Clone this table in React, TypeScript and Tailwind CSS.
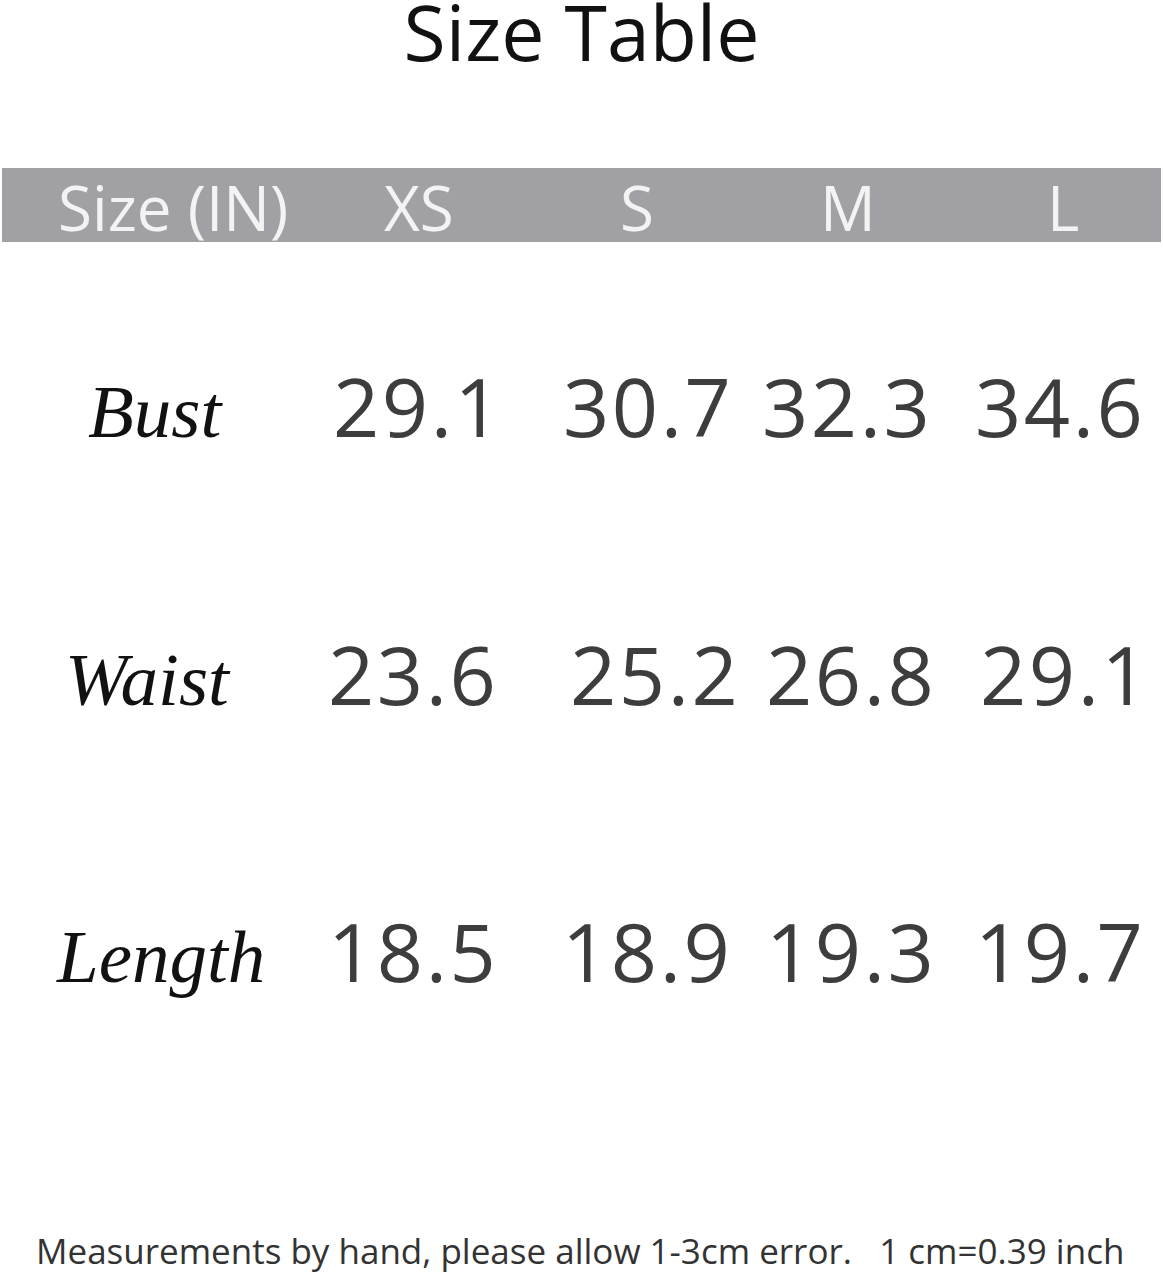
import React from 'react';

const HEADER = [
  { label: 'Size (IN)', cls: 'w-[382px] pl-[56px]' },
  { label: 'XS', cls: 'w-[236px]' },
  { label: 'S', cls: 'w-[200px]' },
  { label: 'M', cls: 'w-[227px]' },
  { label: 'L', cls: 'flex-1' },
];

const ROWS = [
  {
    name: 'Bust',
    gap: 'mt-[114px]',
    label: 'w-[333px] pl-[88px]',
    cells: [
      { v: '29.1', cls: 'w-[230px]' },
      { v: '30.7', cls: 'w-[199px]' },
      { v: '32.3', cls: 'w-[213px]' },
      { v: '34.6', cls: 'flex-1' },
    ],
  },
  {
    name: 'Waist',
    gap: 'mt-[168px]',
    label: 'w-[328px] pl-[65px]',
    cells: [
      { v: '23.6', cls: 'w-[242px]' },
      { v: '25.2', cls: 'w-[196px]' },
      { v: '26.8', cls: 'w-[214px]' },
      { v: '29.1', cls: 'flex-1' },
    ],
  },
  {
    name: 'Length',
    gap: 'mt-[177px]',
    label: 'w-[328px] pl-[57px]',
    cells: [
      { v: '18.5', cls: 'w-[234px]' },
      { v: '18.9', cls: 'w-[204px]' },
      { v: '19.3', cls: 'w-[209px]' },
      { v: '19.7', cls: 'flex-1' },
    ],
  },
];

export default function App() {
  return (
    <div className="w-[1163px] h-[1275px] overflow-hidden bg-white flex flex-col font-['Open_Sans',sans-serif]">
      {/* Title */}
      <h1 className="h-[64px] text-center text-[77px] leading-[64px] text-[#111111] font-normal">Size Table</h1>

      {/* Header bar */}
      <div className="mt-[104px] mx-[2px] h-[74px] bg-[#a1a0a5] flex">
        {HEADER.map((h) => (
          <div key={h.label} className={`${h.cls} shrink-0 whitespace-nowrap pt-[4px] text-[62px] leading-[70px] text-[#f3f3f3]`}>
            {h.label}
          </div>
        ))}
      </div>

      {/* Measurement rows */}
      {ROWS.map((row) => (
        <div key={row.name} className={`${row.gap} flex items-baseline h-[100px]`}>
          <div className={`${row.label} shrink-0 font-['Liberation_Serif',serif] italic text-[75px] leading-[100px] text-[#111111]`}>
            {row.name}
          </div>
          {row.cells.map((c, i) => (
            <div key={i} className={`${c.cls} shrink-0 whitespace-nowrap text-[81px] tracking-[2.5px] leading-[100px] text-[#3d3d3d]`}>
              {c.v}
            </div>
          ))}
        </div>
      ))}

      {/* Footer note */}
      <p className="mt-[230px] pl-[36px] whitespace-pre text-[35px] leading-[40px] text-[#333333]">
        {'Measurements by hand, please allow 1-3cm error.   1 cm=0.39 inch'}
      </p>
    </div>
  );
}
